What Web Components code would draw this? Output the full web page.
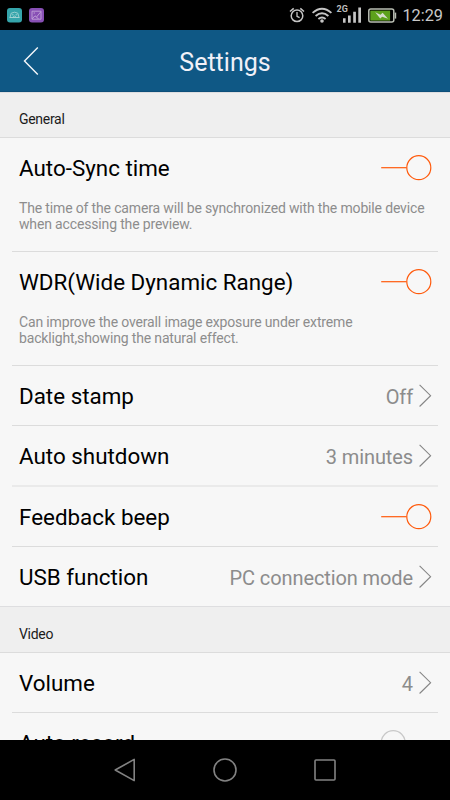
<!DOCTYPE html>
<html lang="en">
<head>
<meta charset="utf-8">
<title>Settings</title>
<style>
html, body { margin: 0; height: 100%; background: #000; }
body { font-family: Roboto, "Noto Sans", sans-serif; overflow: hidden; }
</style>
</head>
<body>
<settings-screen></settings-screen>
<script>
const define = (name, html) => {
  const template = document.createElement('template');
  template.innerHTML = html;
  customElements.define(name, class extends HTMLElement {
    constructor() {
      super();
      this.attachShadow({ mode: 'open' }).append(template.content.cloneNode(true));
    }
  });
};

define('status-bar', `
<style>
:host { display: flex; align-items: center; height: 30px; flex: none; background: #000; color: #c9c9c9; box-sizing: border-box; padding: 0 7px 0 7px; }
svg { display: block; flex: none; }
.apps { display: flex; gap: 7px; flex: 1; }
.clock { font-size: 16.3px; line-height: 20px; margin: 2px 0 0 5.5px; white-space: nowrap; }
</style>
<div class="apps">
  <svg width="15" height="15" viewBox="0 0 15 15"><rect width="15" height="14.4" rx="3" fill="#35a5ab"/><path d="M3 9.5 L4.2 5.2 Q7.5 3.2 10.8 5.2 L12 9.5 Z M2.5 9.5 H12.5 M5 6.8 H6.6 M8.5 6.8 H10.2 M6 9 Q7.5 7 9 9" fill="none" stroke="#a0d4d4" stroke-width=".9"/></svg>
  <svg width="15" height="15" viewBox="0 0 15 15"><rect width="15" height="14.4" rx="3" fill="#8850b5"/><path d="M3 3.2 H12 V11.2 H3 Z M3.2 10.8 L6 7.8 L7.5 9 L11.8 3.8 M4.6 5 H6 M7.5 9 L9.5 11" fill="none" stroke="#c3a4d9" stroke-width=".9"/></svg>
</div>
<svg width="116" height="30" viewBox="281 0 116 30">
  <g fill="none" stroke="#c5c5c5">
    <circle cx="297" cy="15.8" r="5.8" stroke-width="1.5"/>
    <path d="M297 12 V16.3 L299.6 17.6" stroke-width="1.3"/>
    <path d="M290 11.5 L293.7 8.4 M304 11.5 L300.3 8.4" stroke-width="1.6"/>
    <path d="M312.6 12.9 Q322 4.8 331.4 12.9 M315.6 16 Q322 10.5 328.4 16 M318.4 18.9 Q322 16 325.6 18.9" stroke-width="1.9"/>
  </g>
  <circle cx="322" cy="21" r="1.8" fill="#c5c5c5"/>
  <text x="336.5" y="11.7" font-size="9" font-weight="700" fill="#bdbdbd" textLength="11.3" lengthAdjust="spacingAndGlyphs">2G</text>
  <path d="M343 18.3h2.6v4.5H343z M348 15.5h2.7v7.3H348z M353.2 11.8h2.7v11h-2.7z M358.3 7.5h2.7v15.3h-2.7z" fill="#c5c5c5"/>
  <rect x="368.8" y="9.1" width="25" height="13" rx="2" fill="#000" stroke="#b9beb3" stroke-width="1.5"/>
  <rect x="370.3" y="10.6" width="19.8" height="10" fill="#5da11c"/>
  <path d="M394.7 12.6h1.5v6h-1.5z" fill="#b9beb3"/>
  <path d="M375.2 12.2 L380.5 14.7 L382.6 12.8 L388 18.7 L382.2 16.7 L380.2 18.6 Z" fill="#d5ddcc"/>
</svg>
<span class="clock">12:29</span>`);

define('title-bar', `
<style>
:host { display: grid; grid-template-columns: 60px 1fr 60px; align-items: center; height: 62px; flex: none; background: #0f5885; color: #f1f1f8; box-sizing: border-box; border-bottom: 1px solid #0d4f7a; }
svg { display: block; margin-left: 20px; }
.title { font-size: 25px; line-height: 30px; text-align: center; padding: 4px 0 0 0; }
</style>
<svg width="20" height="32" viewBox="0 0 20 32"><path d="M17.8 2.5 L4.5 16 L17.8 29.5" fill="none" stroke="#f5f7fa" stroke-width="1.4"/></svg>
<div class="title"><slot></slot></div>`);

define('section-heading', `
<style>
:host { display: flex; align-items: center; height: 46px; flex: none; box-sizing: border-box; padding: 8px 19px 0; background: #efefef; border-top: 1px solid #dedee0; border-bottom: 1px solid #dcdcdc; color: #1b1b1b; font-size: 14px; letter-spacing: -.3px; line-height: 16px; }
</style>
<slot></slot>`);

define('toggle-switch', `
<style>
:host { display: block; flex: none; color: #ff5a0c; }
:host([off]) { color: #c8c8c8; transform: scaleX(-1); margin-right: -2px; }
svg { display: block; overflow: visible; }
</style>
<svg width="52" height="28" viewBox="0 0 52 28"><path d="M2.2 13.7 H27.6" stroke="currentColor" stroke-width="1.2"/><circle cx="39.8" cy="13.7" r="12" fill="none" stroke="currentColor" stroke-width="1.2"/></svg>`);

define('value-link', `
<style>
:host { display: flex; align-items: center; flex: none; color: #8c8c8c; font-size: 20px; letter-spacing: -.1px; line-height: 24px; gap: 5px; }
svg { display: block; overflow: visible; }
.v { padding-top: 1px; }
</style>
<span class="v"><slot></slot></span>
<svg width="13" height="24" viewBox="0 0 13 24"><path d="M1.6 .9 L12.6 11.7 L1.6 22.5" fill="none" stroke="#858585" stroke-width="1.1"/></svg>`);

define('setting-row', `
<style>
:host { display: flex; flex-direction: column; flex: none; box-sizing: border-box; height: 60px; margin: 0 12px; padding: 0 7px; border-bottom: 1px solid #dcdcdc; }
:host([tall]) { height: 114px; }
:host([soft]) { height: 61px; border-bottom: 2px solid #eaeaea; }
:host([last]) { height: 59px; border-bottom: 0; }
.head { display: flex; align-items: center; justify-content: space-between; height: 60px; flex: none; }
.name { font-size: 22.4px; line-height: 28px; color: #000; white-space: nowrap; }
::slotted([slot=note]) { display: block; font-size: 14px; letter-spacing: -.155px; line-height: 16.5px; color: #8d8d8d; white-space: nowrap; padding-top: 1.5px; }
</style>
<div class="head"><span class="name"><slot></slot></span><slot name="control"></slot></div>
<slot name="note"></slot>`);

define('nav-bar', `
<style>
:host { display: flex; justify-content: center; align-items: center; gap: 72px; height: 60px; flex: none; background: #000; }
svg { display: block; }
</style>
<svg width="28" height="28" viewBox="0 0 28 28"><path d="M4.2 14 L23.2 3.4 V24.6 Z" fill="none" stroke="#828282" stroke-width="1.6" stroke-linejoin="round"/></svg>
<svg width="28" height="28" viewBox="0 0 28 28"><circle cx="14" cy="14" r="11" fill="none" stroke="#828282" stroke-width="1.6"/></svg>
<svg width="28" height="28" viewBox="0 0 28 28"><rect x="4" y="4" width="20" height="20" rx="1" fill="none" stroke="#828282" stroke-width="1.6"/></svg>`);

define('settings-screen', `
<style>
:host { display: flex; flex-direction: column; width: 450px; height: 800px; overflow: hidden; }
main { display: flex; flex-direction: column; flex: 1; min-height: 0; overflow: hidden; background: #f7f7f7; }
</style>
<status-bar></status-bar>
<title-bar>Settings</title-bar>
<main>
  <section-heading>General</section-heading>
  <setting-row tall>Auto-Sync time<toggle-switch slot="control"></toggle-switch><span slot="note">The time of the camera will be synchronized with the mobile device<br>when accessing the preview.</span></setting-row>
  <setting-row tall>WDR(Wide Dynamic Range)<toggle-switch slot="control"></toggle-switch><span slot="note">Can improve the overall image exposure under extreme<br>backlight,showing the natural effect.</span></setting-row>
  <setting-row>Date stamp<value-link slot="control">Off</value-link></setting-row>
  <setting-row soft>Auto shutdown<value-link slot="control">3 minutes</value-link></setting-row>
  <setting-row>Feedback beep<toggle-switch slot="control"></toggle-switch></setting-row>
  <setting-row last>USB function<value-link slot="control">PC connection mode</value-link></setting-row>
  <section-heading style="height:47px">Video</section-heading>
  <setting-row>Volume<value-link slot="control">4</value-link></setting-row>
  <setting-row>Auto record<toggle-switch slot="control" off></toggle-switch></setting-row>
</main>
<nav-bar></nav-bar>`);
</script>
</body>
</html>
